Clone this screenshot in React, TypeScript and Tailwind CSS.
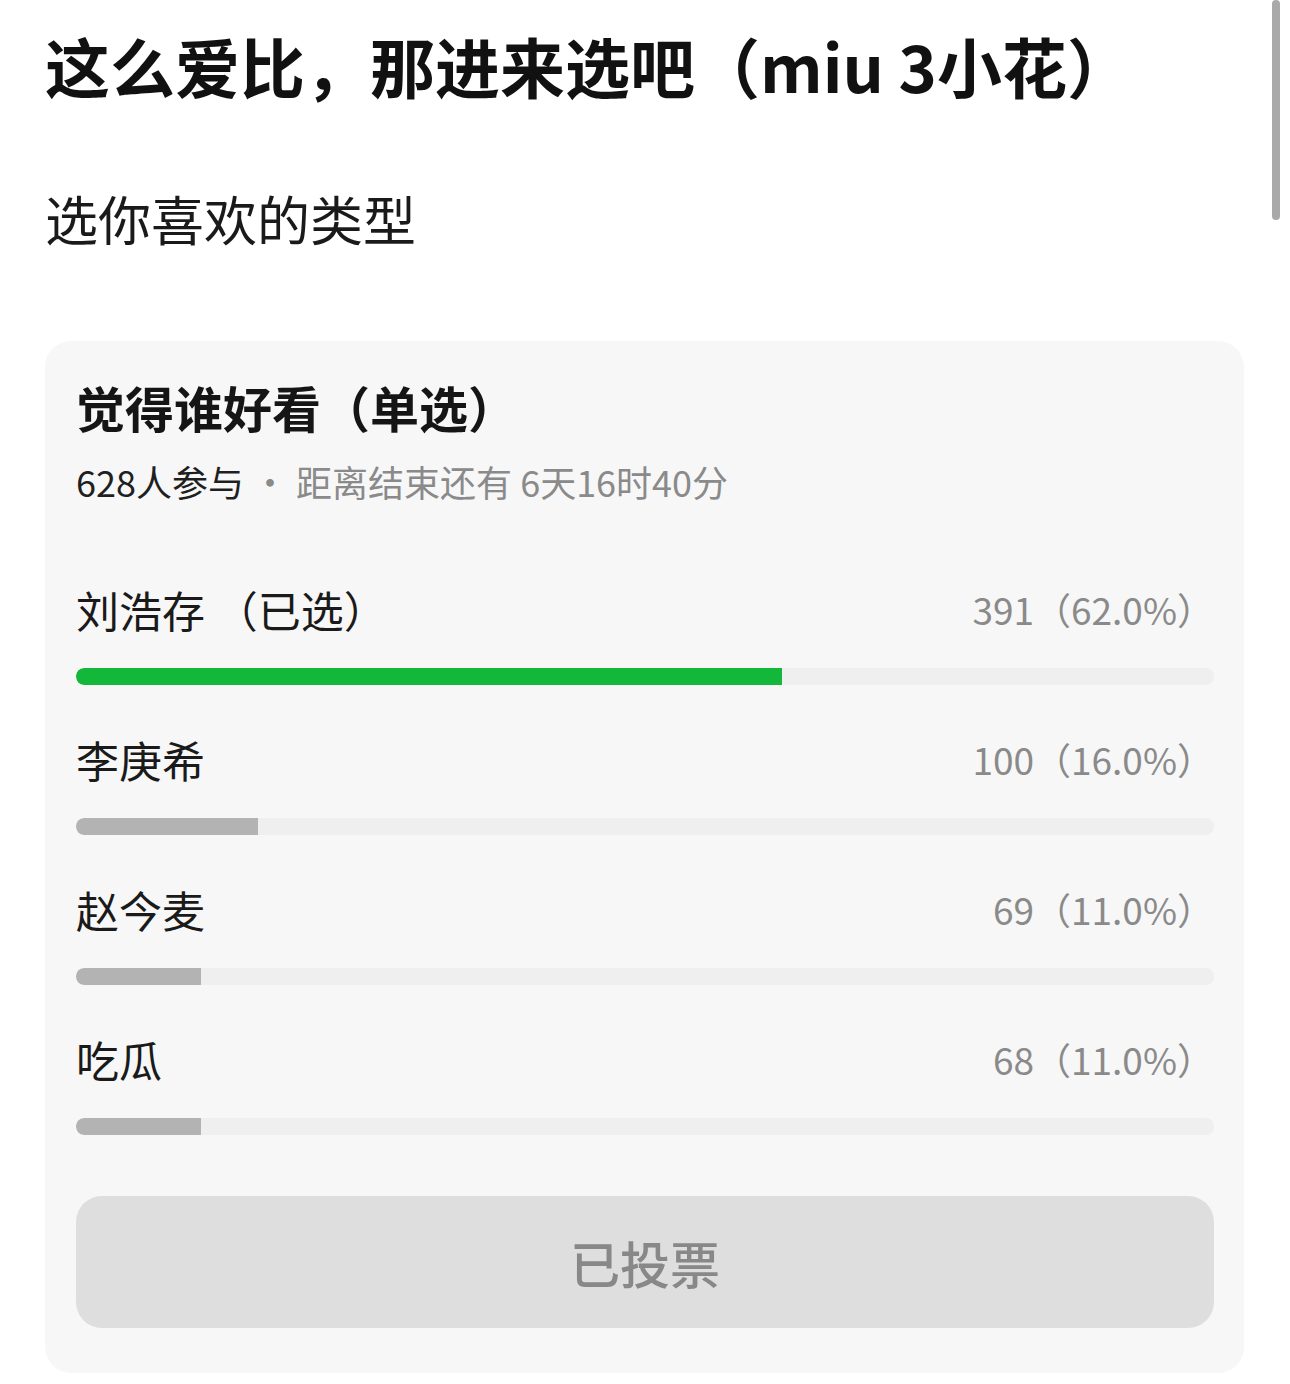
import React from "react";

const options = [
  { name: "刘浩存", selected: true, count: 391, pct: 62.0 },
  { name: "李庚希", selected: false, count: 100, pct: 16.0 },
  { name: "赵今麦", selected: false, count: 69, pct: 11.0 },
  { name: "吃瓜", selected: false, count: 68, pct: 11.0 },
];

export default function App() {
  return (
    <div
      className="relative w-[1290px] h-[1384px] bg-white overflow-hidden"
      style={{ fontFamily: '"Noto Sans CJK SC", "Noto Sans", sans-serif' }}
    >
      <div className="absolute right-[10px] top-0 w-[8px] h-[220px] rounded-full bg-[#a9a9a9]" />
      <div className="pl-[45px] pr-[46px] pt-[25px]">
        <h1 className="text-[65px] leading-[80px] font-bold text-[#111]">
          这么爱比，那进来选吧（miu 3小花）
        </h1>
        <p className="mt-[78px] text-[53px] leading-[70px] text-[#1a1a1a]">选你喜欢的类型</p>
        <div className="mt-[88px] rounded-[26px] bg-[#f7f7f7] pl-[31px] pr-[30px] pt-[37px] pb-[45px]">
          <h2 className="text-[49px] leading-[58px] font-bold text-[#151515]">觉得谁好看（单选）</h2>
          <div className="mt-[22px] text-[36px] leading-[46px]">
            <span className="text-[#1f1f1f]">628人参与</span>
            <span className="text-[#8a8a8a]"> · 距离结束还有 6天16时40分</span>
          </div>
          <div className="mt-[80px] flex flex-col gap-[49px]">
            {options.map((o) => (
              <div key={o.name}>
                <div className="flex items-center justify-between h-[50px]">
                  <span className="text-[43px] leading-[50px] text-[#1a1a1a]">
                    {o.name}
                    {o.selected ? <span> （已选）</span> : null}
                  </span>
                  <span className="text-[37px] leading-[50px] text-[#8a8a8a]">
                    {o.count}（{o.pct.toFixed(1)}%）
                  </span>
                </div>
                <div className="mt-[34px] h-[17px] rounded-[8px] bg-[#efefef] overflow-hidden">
                  <div
                    className={
                      o.selected
                        ? "h-full rounded-l-[8px] bg-[#13b83a]"
                        : "h-full rounded-l-[8px] bg-[#b3b3b3]"
                    }
                    style={{ width: `${o.pct}%` }}
                  />
                </div>
              </div>
            ))}
          </div>
          <div className="mt-[61px] h-[132px] rounded-[26px] bg-[#dedede] flex items-center justify-center">
            <span className="text-[50px] font-medium text-[#888]">已投票</span>
          </div>
        </div>
      </div>
    </div>
  );
}
